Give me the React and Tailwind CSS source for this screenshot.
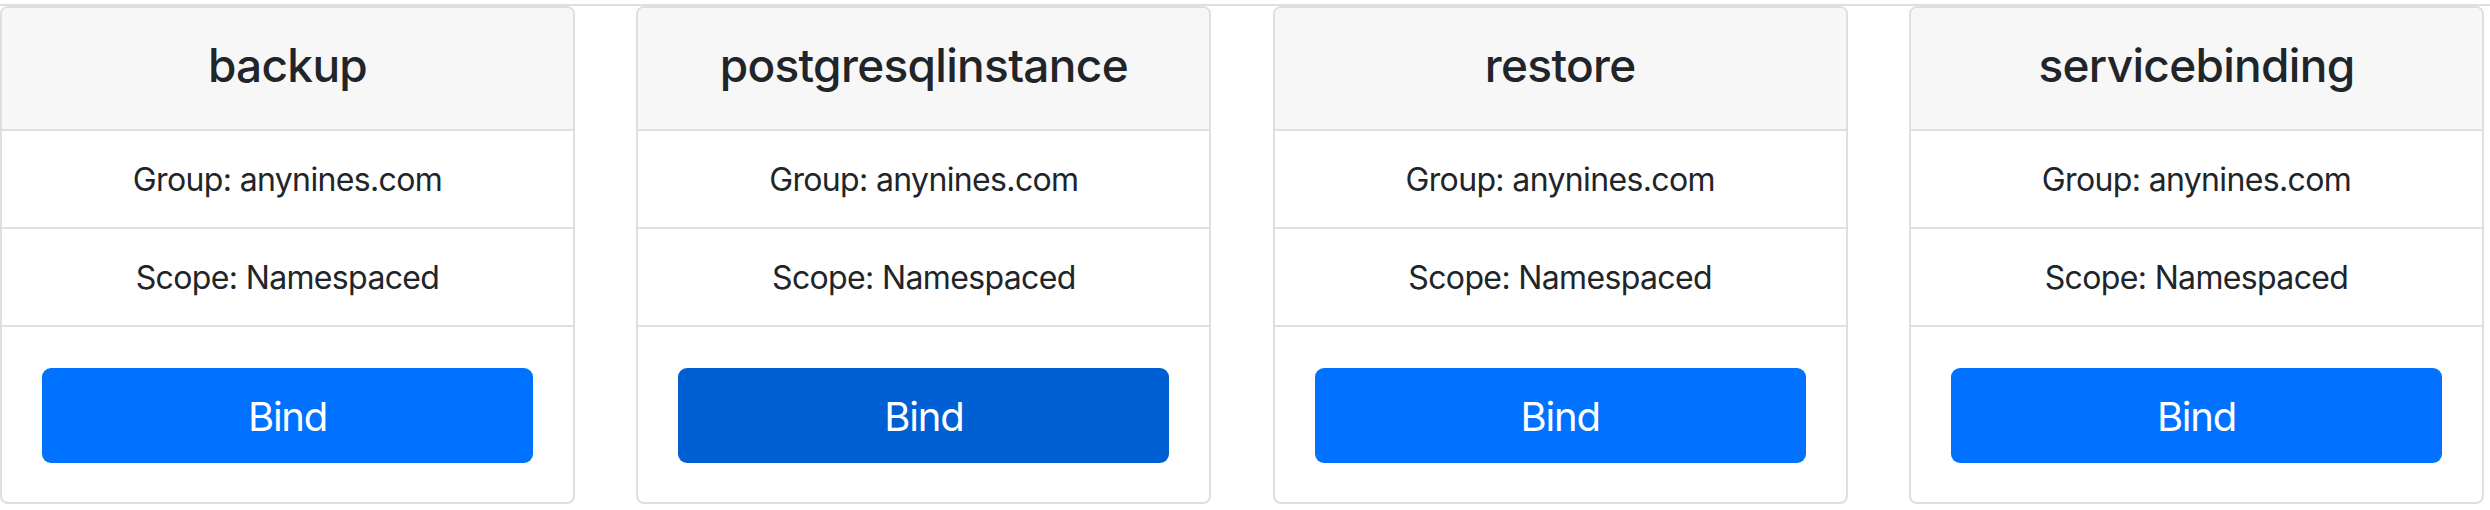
const kinds = [
    { name: "backup", active: false },
    { name: "postgresqlinstance", active: true },
    { name: "restore", active: false },
    { name: "servicebinding", active: false },
];

const KindCard = ({ name, active }) => {
    return (
        <div className="w-[575px] flex flex-col rounded-[8px] border-2 border-[#dfdfdf] bg-white overflow-hidden">
            <div className="h-[123px] flex items-center justify-center bg-[#f7f7f7] border-b-2 border-[#dfdfdf]">
                <h4 className="text-[46px] leading-[58px] font-medium tracking-[-0.015em] text-[#212529] pb-[8px]">{name}</h4>
            </div>

            <div className="h-[98px] flex items-center justify-center border-b-2 border-[#dfdfdf]">
                <p className="text-[32px] leading-[48px] tracking-[-0.02em] text-[#212529] pt-[2px]">Group: anynines.com</p>
            </div>

            <div className="h-[98px] flex items-center justify-center border-b-2 border-[#dfdfdf]">
                <p className="text-[32px] leading-[48px] tracking-[-0.02em] text-[#212529] pt-[2px]">Scope: Namespaced</p>
            </div>

            <div className="px-[40px] pt-[41px] pb-[39px]">
                <button
                    className={
                        active
                            ? "w-full h-[95px] rounded-[9px] bg-[#005fd3] text-white text-[40px] leading-[60px] tracking-[-0.03em] pt-[2px]"
                            : "w-full h-[95px] rounded-[9px] bg-[#0072ff] text-white text-[40px] leading-[60px] tracking-[-0.03em] pt-[2px]"
                    }
                >
                    Bind
                </button>
            </div>
        </div>
    );
};

export default function App() {
    return (
        <div className="w-[2490px] h-[510px] bg-white font-['Inter','Liberation_Sans',sans-serif]">
            <div className="pt-[4px]">
                <div className="h-[2px] bg-[#dfdfdf]"></div>
            </div>

            <main className="w-[2484px] flex justify-between">
                {kinds.map((kind) => (
                    <KindCard key={kind.name} name={kind.name} active={kind.active} />
                ))}
            </main>
        </div>
    );
}
